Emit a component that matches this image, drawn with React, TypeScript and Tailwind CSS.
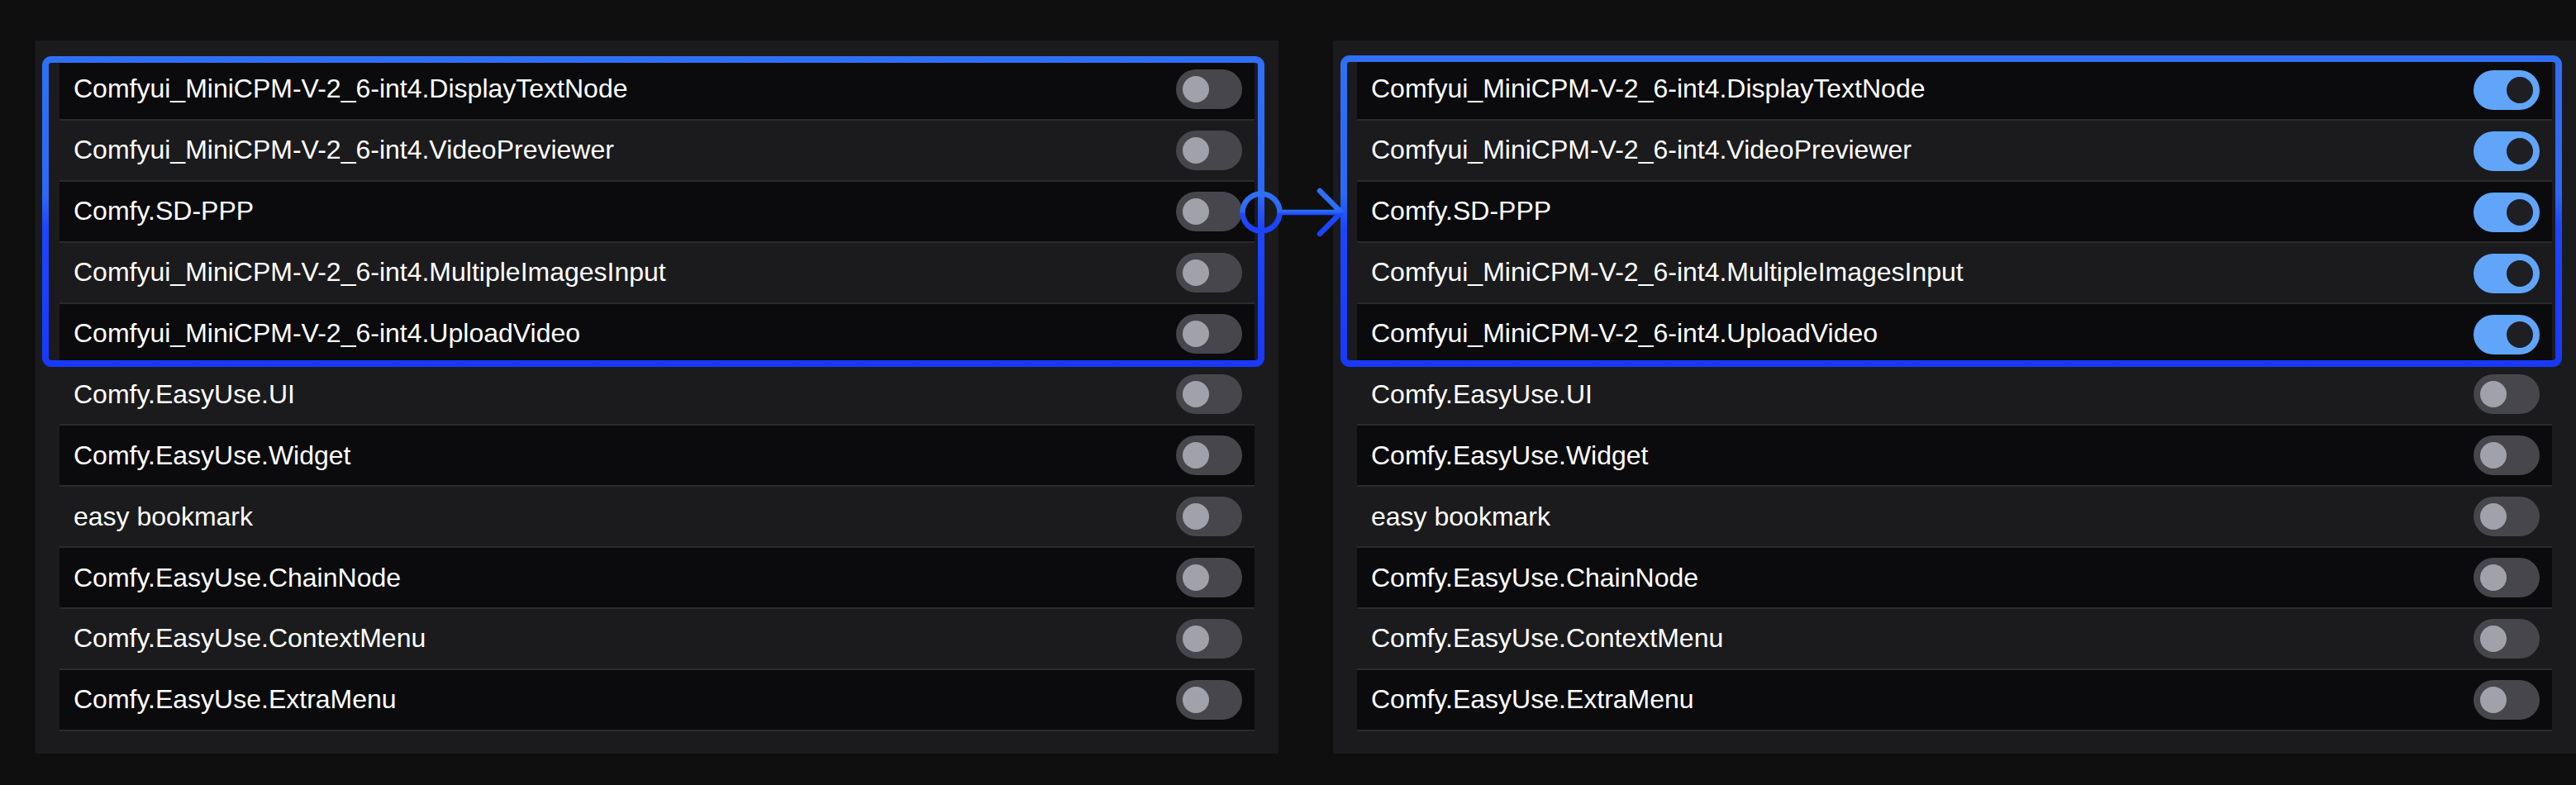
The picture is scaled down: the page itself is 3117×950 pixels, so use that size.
import React from "react"

type Item = {
  name: string
  on: boolean
}

const leftItems: Item[] = [
  { name: "Comfyui_MiniCPM-V-2_6-int4.DisplayTextNode", on: false },
  { name: "Comfyui_MiniCPM-V-2_6-int4.VideoPreviewer", on: false },
  { name: "Comfy.SD-PPP", on: false },
  { name: "Comfyui_MiniCPM-V-2_6-int4.MultipleImagesInput", on: false },
  { name: "Comfyui_MiniCPM-V-2_6-int4.UploadVideo", on: false },
  { name: "Comfy.EasyUse.UI", on: false },
  { name: "Comfy.EasyUse.Widget", on: false },
  { name: "easy bookmark", on: false },
  { name: "Comfy.EasyUse.ChainNode", on: false },
  { name: "Comfy.EasyUse.ContextMenu", on: false },
  { name: "Comfy.EasyUse.ExtraMenu", on: false },
]

const rightItems: Item[] = leftItems.map((item, i) => ({ ...item, on: i < 5 }))

const Toggle = ({ on }: { on: boolean }) => {
  if (on) {
    return (
      <div className="mt-[3px] flex h-[48px] w-[80px] items-center justify-end rounded-full bg-[#60a5fa] pr-[8px]">
        <div className="h-[32px] w-[32px] rounded-full bg-[#1f1f23]" />
      </div>
    )
  }
  return (
    <div className="flex h-[48px] w-[80px] items-center justify-start rounded-full bg-[#46464c] pl-[8px]">
      <div className="h-[32px] w-[32px] rounded-full bg-[#a1a1a9]" />
    </div>
  )
}

const Row = ({ item, index }: { item: Item; index: number }) => {
  return (
    <div
      className={
        index % 2 === 0
          ? "flex h-[73.9px] items-center justify-between border-b-2 border-[#2b2b2e] bg-[#0b0b0d] pl-[17px] pr-[15px]"
          : "flex h-[73.9px] items-center justify-between border-b-2 border-[#2b2b2e] bg-[#1b1b1d] pl-[17px] pr-[15px]"
      }
    >
      <span className="mb-[1px] text-[32px] text-white font-['Liberation_Sans',Arial,sans-serif]">
        {item.name}
      </span>
      <Toggle on={item.on} />
    </div>
  )
}

const Panel = ({ items }: { items: Item[] }) => {
  return (
    <div className="flex w-[1504px] flex-col bg-[#1b1b1d] px-[29px] pt-[23px] pb-[27px]">
      {items.map((item, i) => (
        <Row key={i} item={item} index={i} />
      ))}
    </div>
  )
}

const Annotations = () => {
  return (
    <svg
      className="pointer-events-none absolute left-0 top-0"
      width="3117"
      height="950"
      viewBox="0 0 3117 950"
      fill="none"
    >
      <defs>
        <linearGradient id="boxGrad" x1="0" y1="67" x2="0" y2="444" gradientUnits="userSpaceOnUse">
          <stop offset="0" stopColor="#3070f6" />
          <stop offset="0.45" stopColor="#2b68f7" />
          <stop offset="0.55" stopColor="#1d46ff" />
          <stop offset="1" stopColor="#1838ff" />
        </linearGradient>
        <linearGradient id="ringGrad" x1="0" y1="231" x2="0" y2="284" gradientUnits="userSpaceOnUse">
          <stop offset="0" stopColor="#3070f6" />
          <stop offset="0.47" stopColor="#2c6af6" />
          <stop offset="0.53" stopColor="#1e48ff" />
          <stop offset="1" stopColor="#1b42ff" />
        </linearGradient>
      </defs>
      {/* selection boxes */}
      <rect x="55" y="72" width="1471" height="368" rx="7" stroke="url(#boxGrad)" strokeWidth="8" />
      <rect x="1626" y="71" width="1470" height="369" rx="7" stroke="url(#boxGrad)" strokeWidth="8" />
      {/* connector */}
      <circle cx="1526" cy="257" r="22.5" stroke="url(#ringGrad)" strokeWidth="6.5" />
      <line x1="1548" y1="257" x2="1624" y2="257" stroke="url(#ringGrad)" strokeWidth="6.5" />
      <polyline
        points="1597,231 1623,257 1597,283"
        stroke="url(#ringGrad)"
        strokeWidth="6.5"
        strokeLinecap="round"
        strokeLinejoin="round"
      />
    </svg>
  )
}

export default function App() {
  return (
    <div className="relative h-[950px] w-[3117px] overflow-hidden bg-[#0f0f0f]">
      <div className="flex gap-[66px] pl-[43px] pt-[49px]">
        <Panel items={leftItems} />
        <Panel items={rightItems} />
      </div>
      <Annotations />
    </div>
  )
}
